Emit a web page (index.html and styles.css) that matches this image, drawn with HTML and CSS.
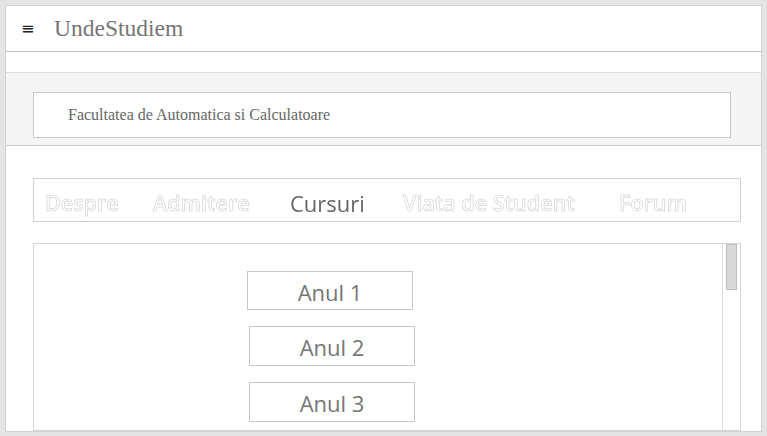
FILE: index.html
```html
<!DOCTYPE html>
<html>
<head>
<meta charset="utf-8">
<link rel="stylesheet" href="styles.css">
</head>
<body>
<div class="panel">
  <header class="topbar">
    <span class="burger">&#8801;</span>
    <span class="brand">UndeStudiem</span>
  </header>
  <section class="band">
    <div class="faculty">Facultatea de Automatica si Calculatoare</div>
  </section>
  <nav class="tabs">
    <span class="tab">Despre</span>
    <span class="tab">Admitere</span>
    <span class="tab active">Cursuri</span>
    <span class="tab">Viata de Student</span>
    <span class="tab">Forum</span>
  </nav>
  <div class="content">
    <div class="years">
      <div class="year first">Anul 1</div>
      <div class="year">Anul 2</div>
      <div class="year">Anul 3</div>
    </div>
    <div class="scrollbar"><div class="thumb"></div></div>
  </div>
</div>
</body>
</html>
```
FILE: styles.css
```css
html, body {
  margin: 0;
  padding: 0;
}
body {
  background: #e4e4e4;
  padding: 5px;
  height: 436px;
  box-sizing: border-box;
  overflow: hidden;
}
.panel {
  background: #ffffff;
  border: 1px solid #d2d2d2;
  width: 757px;
  height: 427px;
  box-sizing: border-box;
  overflow: hidden;
  display: flex;
  flex-direction: column;
}
.topbar {
  height: 45px;
  border-bottom: 1px solid #bdbdbd;
  display: flex;
  align-items: center;
  flex-shrink: 0;
}
.burger {
  font-family: "DejaVu Sans", sans-serif;
  font-size: 16px;
  color: #222;
  margin-left: 15px;
  width: 33px;
}
.brand {
  font-family: "Liberation Serif", serif;
  font-size: 23.5px;
  color: #757575;
}
.band {
  margin-top: 20px;
  background: #f4f4f4;
  border-top: 1px solid #dcdcdc;
  border-bottom: 1px solid #cacaca;
  padding: 19px 30px 7px 27px;
  flex-shrink: 0;
}
.faculty {
  background: #fff;
  border: 1px solid #c8c8c8;
  height: 46px;
  box-sizing: border-box;
  display: flex;
  align-items: center;
  padding-left: 34px;
  font-family: "Liberation Serif", serif;
  font-size: 16px;
  color: #666;
}
.tabs {
  margin: 32px 20px 0 27px;
  height: 44px;
  box-sizing: border-box;
  border: 1px solid #d0d0d0;
  display: grid;
  grid-template-columns: 108px 137px 113px 216px auto;
  align-items: end;
  padding: 0 0 3px 11px;
  flex-shrink: 0;
  will-change: transform;
}
.tab {
  font-family: "Open Sans", sans-serif;
  font-size: 21.5px;
  font-weight: 600;
  line-height: 30px;
  color: #fff;
  -webkit-text-stroke: 0.55px #c8c8c8;
  white-space: nowrap;
}
.tab.active {
  font-size: 22px;
  font-weight: 400;
  color: #666;
  -webkit-text-stroke: 0;
}
.content {
  margin: 21px 20px 0 27px;
  border: 1px solid #d4d4d4;
  height: 188px;
  box-sizing: border-box;
  display: flex;
  flex-shrink: 0;
}
.years {
  flex: 1;
  display: flex;
  flex-direction: column;
  gap: 16px;
  padding: 27px 0 0 215px;
}
.year {
  width: 166px;
  height: 40px;
  box-sizing: border-box;
  border: 1px solid #c6c6c6;
  display: flex;
  align-items: center;
  justify-content: center;
  font-family: "Open Sans", sans-serif;
  font-size: 22px;
  color: #767676;
  padding-top: 2px;
}
.year.first {
  margin-left: -2px;
  height: 39px;
}
.scrollbar {
  width: 18px;
  border-left: 1px solid #dedede;
  box-sizing: border-box;
  padding: 0 3px 0 3px;
}
.thumb {
  height: 46px;
  background: #d8d8d8;
  border: 1px solid #bdbdbd;
  box-sizing: border-box;
}
```
